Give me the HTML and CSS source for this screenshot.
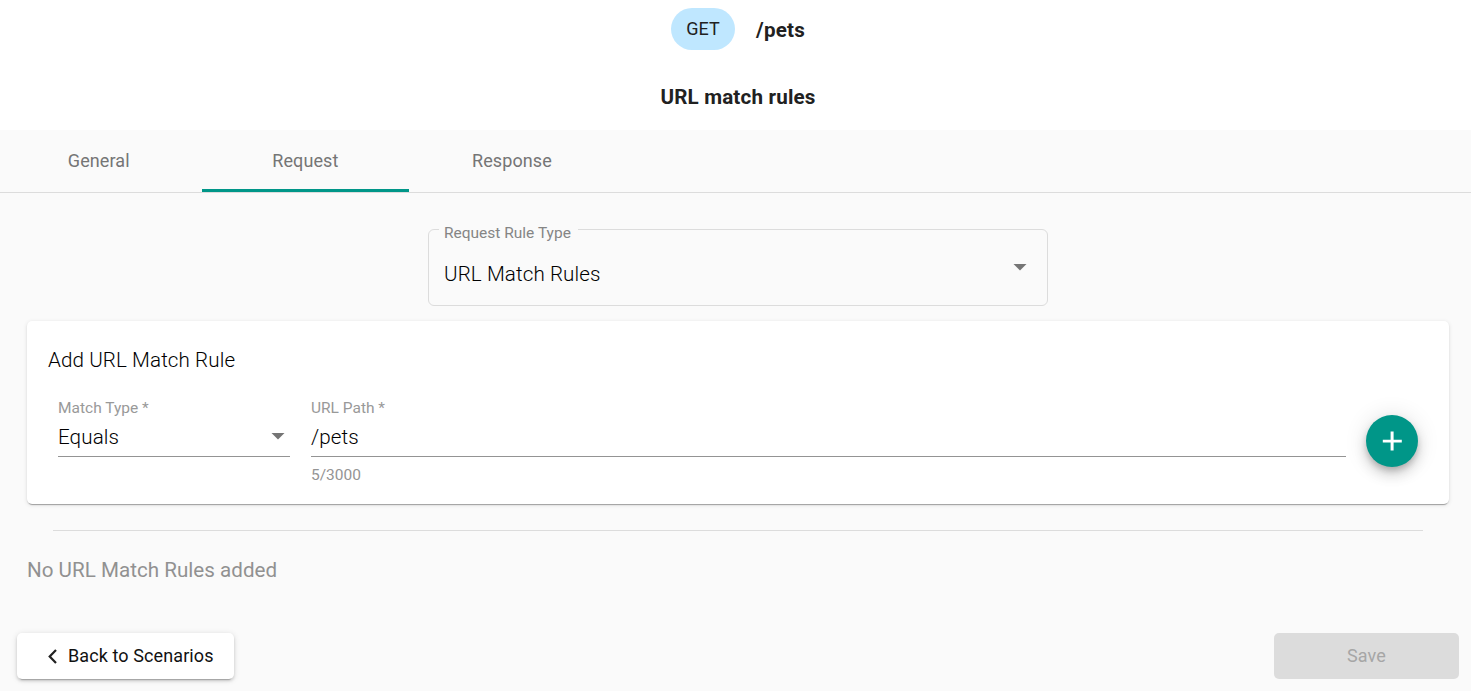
FILE: index.html
```html
<!DOCTYPE html>
<html lang="en">
<head>
<meta charset="utf-8">
<title>URL match rules</title>
<link rel="stylesheet" href="styles.css">
</head>
<body>
<header class="head">
  <div class="endpoint">
    <span class="method">GET</span>
    <span class="path">/pets</span>
  </div>
  <h1 class="title">URL match rules</h1>
</header>
<nav class="tabs">
  <a class="tab">General</a>
  <a class="tab active">Request</a>
  <a class="tab">Response</a>
</nav>
<main class="content">
  <fieldset class="outlined">
    <legend>Request Rule Type</legend>
    <span class="value">URL Match Rules</span>
    <svg class="arrow" width="14" height="7" viewBox="0 0 14 7"><path fill="#757575" d="M.5 0h13L7 6.5z"/></svg>
  </fieldset>
  <section class="card">
    <h2 class="card-title">Add URL Match Rule</h2>
    <div class="row">
      <div class="field type">
        <label>Match Type *</label>
        <div class="input"><span>Equals</span><svg class="arrow" width="14" height="7" viewBox="0 0 14 7"><path fill="#757575" d="M.5 0h13L7 6.5z"/></svg></div>
      </div>
      <div class="field url">
        <label>URL Path *</label>
        <div class="input"><span>/pets</span></div>
        <div class="hint">5/3000</div>
      </div>
      <button class="fab" aria-label="Add"><svg width="32" height="32" viewBox="0 0 32 32"><path fill="#fff" d="M14.6 6.5h3v8.2h8.2v2.8h-8.2v8h-3v-8H6.8v-2.8h7.8z"/></svg></button>
    </div>
  </section>
  <hr class="divider">
  <p class="empty">No URL Match Rules added</p>
</main>
<footer class="actions">
  <button class="btn back"><svg width="10" height="16" viewBox="0 0 10 16"><path d="M9 1.9 2.7 8.4 9 14.9" fill="none" stroke="#212121" stroke-width="2.2"/></svg><span>Back to Scenarios</span></button>
  <button class="btn save" disabled>Save</button>
</footer>
</body>
</html>
```
FILE: styles.css
```css
* { box-sizing: border-box; }
body {
  margin: 0;
  height: 691px;
  overflow: hidden;
  background: #fafafa;
  color: #212121;
  font: 400 20.6px/24px Roboto, sans-serif;
}
h1, h2, p { margin: 0; font-weight: 400; font-size: inherit; white-space: nowrap; }
button { border: 0; padding: 0; font-family: inherit; }
svg { display: block; }

.head { height: 130px; padding-top: 8px; background: #fff; }
.endpoint { display: flex; justify-content: center; align-items: center; gap: 21px; padding-left: 5px; }
.method {
  width: 64px; height: 42px; border-radius: 21px;
  background: #bfe7ff;
  font-size: 18px; line-height: 42px; text-align: center;
}
.path { font-weight: 700; padding-top: 2px; letter-spacing: .2px; }
.title { margin-top: 35px; padding-left: 5px; text-align: center; font-weight: 700; letter-spacing: .18px; }

.tabs { display: flex; height: 63px; margin-left: -4.5px; border-bottom: 1px solid #dcdcdc; }
.tab {
  flex: 0 0 206.6px; height: 62px;
  text-align: center; line-height: 62px;
  font-size: 18px; letter-spacing: .1px; color: #757575;
}
.active { border-bottom: 3px solid #009688; }

.content { padding: 27px 22px 0 27px; height: 440px; }
.outlined {
  display: flex; justify-content: space-between; align-items: center;
  width: 620px; height: 86px;
  margin: 0 auto 15px; padding: 0 20px 9px 15px;
  border: 1px solid #dcdcdc; border-radius: 6px;
}
.outlined legend { margin-left: -5px; padding: 8px 7px 0 5px; line-height: 10px; height: 18px; font-size: 15.5px; color: #858585; }
.outlined .value { padding-top: 13px; }
.value, .card-title, .input span { font-weight: 300; letter-spacing: .1px; color: #000; }

.card {
  height: 183px; padding: 27px 31px 0 21px;
  border-radius: 5px; background: #fff;
  box-shadow: 0 3px 1px -2px rgba(0,0,0,.2), 0 1px 1px rgba(0,0,0,.14), 0 1px 4px rgba(0,0,0,.12);
}
.row { display: flex; padding: 27px 0 0 10px; }
.field label { display: block; line-height: 19px; font-size: 15.5px; color: #999; }
.type { width: 232px; margin-right: 21px; }
.url { flex: 1; margin-right: 20px; }
.input { display: flex; justify-content: space-between; align-items: center; height: 39px; padding: 0 5px 1px 0; border-bottom: 1px solid #949494; }
.hint { margin-top: 8px; line-height: 20px; font-size: 15.5px; color: #949494; }
.fab {
  display: grid; place-items: center;
  width: 52px; height: 52px; margin-top: 16px;
  border-radius: 50%; background: #009688;
  box-shadow: 0 4px 6px -1px rgba(0,0,0,.2), 0 8px 13px rgba(0,0,0,.14), 0 1px 23px rgba(0,0,0,.12);
}
.divider { height: 1px; margin: 26px 26px 0; border: 0; background: #dcdcdc; }
.empty { margin-top: 27px; letter-spacing: .02px; color: #919191; }

.actions { display: flex; justify-content: space-between; padding: 0 12px 0 17px; }
.btn { height: 46px; border-radius: 5px; font-size: 18px; letter-spacing: .1px; line-height: 46px; }
.back {
  display: flex; align-items: center; gap: 11px;
  width: 217px; padding-left: 30px;
  background: #fff; color: #111; white-space: nowrap;
  box-shadow: 0 4px 1px -3px rgba(0,0,0,.2), 0 2px 3px rgba(0,0,0,.14), 0 1px 6px rgba(0,0,0,.12);
}
.save { width: 185px; background: #dcdcdc; color: #a6a6a6; }
```
